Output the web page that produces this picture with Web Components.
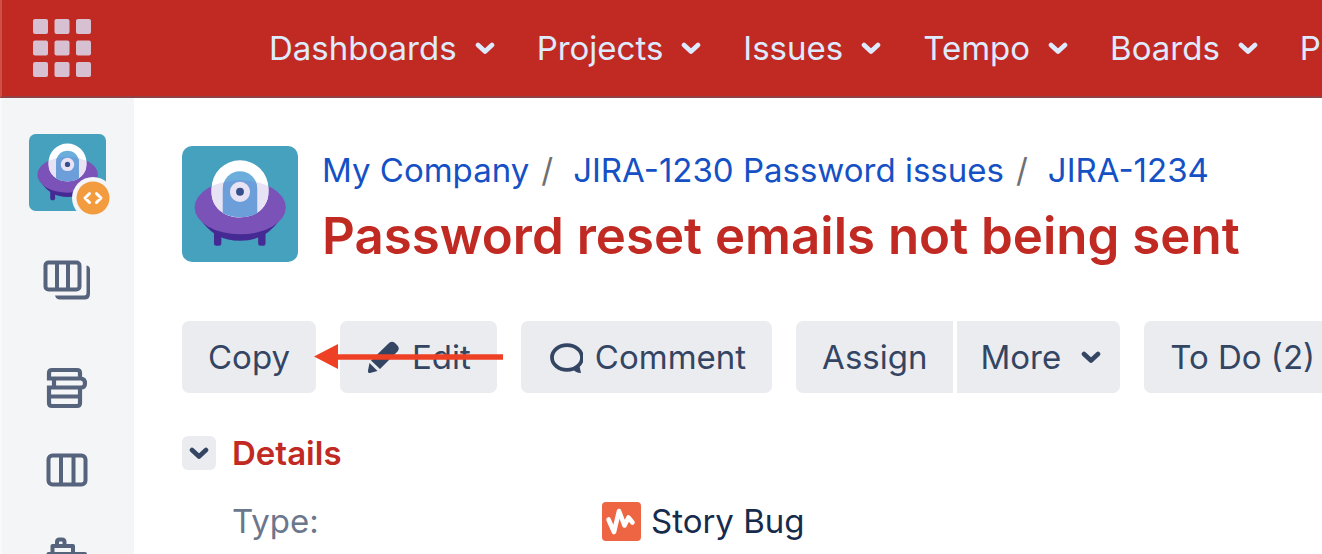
<!DOCTYPE html>
<html lang="en">
<head>
<meta charset="utf-8">
<meta name="viewport" content="width=device-width, initial-scale=1">
<title>JIRA-1234</title>
<style>
  html, body { margin: 0; height: 100%; }
  body { font-family: Inter, "Liberation Sans", sans-serif; font-size: 33px; line-height: 40px; color: #172b4d; background: #fff; overflow: hidden; }
</style>
</head>
<body>
<jira-app></jira-app>
<script>
const define = (name, html) => {
  const template = document.createElement('template');
  template.innerHTML = html;
  customElements.define(name, class extends HTMLElement {
    constructor() {
      super();
      this.attachShadow({ mode: 'open' }).append(template.content.cloneNode(true));
    }
  });
};

define('chevron-icon', `
  <style>:host { display: block; width: 20px; height: 13px; } svg { display: block; }</style>
  <svg width="20" height="13" viewBox="0 0 20 13" aria-hidden="true"><path d="M3 3 10 9.5 17 3" fill="none" stroke="currentColor" stroke-width="4.6" stroke-linecap="round" stroke-linejoin="round"/></svg>`);

define('project-avatar', `
  <style>
    :host { display: block; position: relative; flex: none; width: var(--avatar-size, 116px); height: var(--avatar-size, 116px); }
    svg { display: block; width: 100%; height: 100%; }
  </style>
  <svg viewBox="0 0 115 115" role="img" aria-label="Project avatar">
    <defs><clipPath id="saucer"><ellipse cx="57.7" cy="60.8" rx="45.2" ry="26.8"/></clipPath></defs>
    <rect width="115" height="115" rx="10" fill="#45a1bd"/>
    <path d="M31.7 78H39V96.500Q39 99 36.500 99H34.200Q31.700 99 31.700 96.500ZM75.500 78H82.800V96.500Q82.800 99 80.300 99H78Q75.500 99 75.500 96.500Z" fill="#452a94"/>
    <path d="M18 72Q32 94 57.700 94T97.400 72Z" fill="#452a94"/>
    <ellipse cx="57.700" cy="60.800" rx="45.200" ry="26.800" fill="#7a52b8"/>
    <path d="M29.300 42.300A28.200 28.200 0 0 1 85.700 42.300V46C85.700 60 74 70.700 57.500 70.700S29.300 60 29.300 46Z" fill="#fff"/>
    <path d="M29.300 42.300A28.200 28.200 0 0 1 85.700 42.300V46C85.700 60 74 70.700 57.500 70.700S29.300 60 29.300 46Z" fill="#e8e3f4" clip-path="url(#saucer)"/>
    <path d="M40.500 42A17 17 0 0 1 74.500 42V66.500Q67 70.500 57.500 70.500T40.500 66.500Z" fill="#6caedb"/>
    <path d="M40.500 42A17 17 0 0 1 74.500 42V66.500Q67 70.500 57.500 70.500T40.500 66.500Z" fill="#6c9fd9" clip-path="url(#saucer)"/>
    <circle cx="57.500" cy="45.400" r="10" fill="#e8e3f4"/>
    <circle cx="57.500" cy="45.400" r="3.900" fill="#36508d"/>
  </svg>
  <slot></slot>`);

define('nav-item', `
  <style>
    :host { display: block; flex: none; }
    button { display: flex; align-items: center; gap: 18px; margin: 0; padding: 0; border: 0; background: none; color: inherit; font: inherit; white-space: nowrap; }
  </style>
  <button type="button"><slot></slot><chevron-icon></chevron-icon></button>`);

define('top-bar', `
  <style>
    :host { display: flex; align-items: center; box-sizing: border-box; height: 98px; padding-left: 30px; border-left: 2px solid #cd5049; border-bottom: 2px solid #8f4143; background: #c12a23; color: #deebff; overflow: hidden; }
    .apps { flex: none; width: 60px; height: 60px; margin: 0 177px 0 0; padding: 1px; border: 0; background: none; color: #d7c0d1; }
    svg { display: block; }
    nav { display: flex; gap: 42px; }
  </style>
  <button class="apps" type="button" aria-label="Applications">
    <svg width="58" height="58" viewBox="0 0 58 58" fill="currentColor" aria-hidden="true">
      <rect width="15" height="15" rx="2"/><rect x="21.500" width="15" height="15" rx="2"/><rect x="43" width="15" height="15" rx="2"/>
      <rect y="21.500" width="15" height="15" rx="2"/><rect x="21.500" y="21.500" width="15" height="15" rx="2"/><rect x="43" y="21.500" width="15" height="15" rx="2"/>
      <rect y="43" width="15" height="15" rx="2"/><rect x="21.500" y="43" width="15" height="15" rx="2"/><rect x="43" y="43" width="15" height="15" rx="2"/>
    </svg>
  </button>
  <nav aria-label="Main">
    <nav-item>Dashboards</nav-item><nav-item>Projects</nav-item><nav-item>Issues</nav-item><nav-item>Tempo</nav-item><nav-item>Boards</nav-item><nav-item>P</nav-item>
  </nav>`);

define('side-bar', `
  <style>
    :host { display: block; box-sizing: border-box; flex: none; width: 134px; border-left: 2px solid #f8f9fa; background: #f4f5f7; color: #56637d; overflow: hidden; }
    nav { display: flex; flex-direction: column; align-items: center; padding: 36px 2px 0 0; }
    project-avatar { --avatar-size: 77px; margin-bottom: 45px; }
    .badge { position: absolute; right: -8px; bottom: -8px; width: 42px; height: 42px; }
    a { display: flex; align-items: center; justify-content: center; width: 64px; height: 48px; color: inherit; }
    a.boards { margin-bottom: 60px; }
    a.backlog { margin-bottom: 34px; }
    a.board { margin-bottom: 40px; }
    svg { display: block; }
  </style>
  <nav aria-label="Project">
    <project-avatar>
      <svg class="badge" viewBox="0 0 42 42" aria-hidden="true"><circle cx="21" cy="21" r="21" fill="#f4f5f7"/><circle cx="21" cy="21" r="16.500" fill="#f29b3f"/><path d="M17.500 16.500 13 21 17.500 25.500M24.500 16.500 29 21 24.500 25.500" fill="none" stroke="#fff" stroke-width="3" stroke-linecap="round" stroke-linejoin="round"/></svg>
    </project-avatar>
    <a class="boards" href="#boards" aria-label="Boards"><svg width="48" height="40" viewBox="0 0 48 40" fill="none" stroke="currentColor" stroke-width="4"><rect x="2.500" y="2.500" width="34" height="27" rx="3"/><path d="M14 3V29M25 3V29"/><path d="M43.500 5.500Q47 6 47 9.500V34Q47 39.500 41.500 39.500H17Q13 39.500 12 35.500H41Q43.500 35.500 43.500 33Z" fill="currentColor" stroke="none"/></svg></a>
    <a class="backlog" href="#backlog" aria-label="Backlog"><svg width="42" height="42" viewBox="0 0 42 42" fill="none" stroke="currentColor" stroke-width="4.200"><path d="M3 13.500V6Q3 3 6 3H31Q34 3 34 6V11.500M3 11.500H35Q39 12 39 16.300T35 20.500H3M3 18.500V36Q3 39 6 39H31Q34 39 34 36V20.500M3 29.500H34M8 12V21"/></svg></a>
    <a class="board" href="#board" aria-label="Active board"><svg width="42" height="34" viewBox="0 0 42 34" fill="none" stroke="currentColor" stroke-width="4"><rect x="2.500" y="2.500" width="37" height="29" rx="4"/><path d="M15 3V31M27.500 3V31"/></svg></a>
    <a href="#releases" aria-label="Releases"><svg width="42" height="42" viewBox="0 0 42 42" fill="none" stroke="currentColor" stroke-width="4"><path d="M11 8.500V5Q11 2.500 13.500 2.500H16Q18.500 2.500 18.500 5V8.500M6.500 17V9H27V17M2.500 17H39V39H2.500Z" stroke-linejoin="round"/></svg></a>
  </nav>`);

define('issue-header', `
  <style>
    :host { display: flex; gap: 24px; white-space: nowrap; }
    .text { min-width: 0; }
    ol { display: flex; gap: 12px; margin: 4px 0 14px; padding: 0; list-style: none; }
    li + li::before { content: "/"; margin-right: 20px; color: #707070; }
    a { color: #1551c5; text-decoration: none; }
    h1 { margin: 0; color: #c12a23; font-size: 51px; font-weight: 600; line-height: 64px; }
  </style>
  <project-avatar></project-avatar>
  <div class="text">
    <nav aria-label="Breadcrumb"><ol><li><a href="#project">My Company</a></li><li><a href="#parent">JIRA-1230 Password issues</a></li><li><a href="#issue">JIRA-1234</a></li></ol></nav>
    <h1>Password reset emails not being sent</h1>
  </div>`);

define('tool-button', `
  <style>
    :host { display: block; flex: none; }
    button { display: flex; align-items: center; gap: 12px; height: 72px; margin: 0; padding: 0 var(--pad-x, 26px); border: 0; border-radius: var(--corners, 7px); background: #ebecf0; color: #344563; font: inherit; white-space: nowrap; }
  </style>
  <button type="button"><slot name="before"></slot><slot></slot><slot name="after"></slot></button>`);

define('issue-toolbar', `
  <style>
    :host { display: flex; gap: 24px; }
    .group { display: flex; gap: 4px; }
    .group tool-button:first-child { --corners: 7px 0 0 7px; }
    .group tool-button:last-child { --corners: 0 7px 7px 0; --pad-x: 23px; }
    .callout { position: relative; }
    .arrow { position: absolute; left: 100%; top: 23px; width: 190px; height: 26px; z-index: 1; overflow: visible; }
    svg { display: block; }
    chevron-icon { margin-left: 8px; margin-right: -4px; }
  </style>
  <div class="callout">
    <tool-button>Copy</tool-button>
    <svg class="arrow" viewBox="0 0 190 26" aria-hidden="true"><path d="M-2 12.500 22 0V10.200H187V15.800H22V25Z" fill="#ee4024"/></svg>
  </div>
  <tool-button>
    <svg slot="before" width="34" height="34" viewBox="0 0 34 34" fill="currentColor" aria-hidden="true"><path d="M5 20.500 23 3Q26 .500 29 3L31.500 5.500Q34 8.500 31.500 11.500L14 29ZM3.500 23 11.500 31 4 33Q1.500 33.500 2 30.500Z"/></svg>
    Edit
  </tool-button>
  <tool-button>
    <svg slot="before" width="36" height="32" viewBox="0 0 36 32" aria-hidden="true"><ellipse cx="20" cy="16.500" rx="15" ry="12.300" fill="none" stroke="currentColor" stroke-width="3.800"/><path d="M25 27 32 23 34 32Q28 32 25 27Z" fill="currentColor"/></svg>
    Comment
  </tool-button>
  <div class="group">
    <tool-button>Assign</tool-button>
    <tool-button>More<chevron-icon slot="after"></chevron-icon></tool-button>
  </div>
  <tool-button>To Do (2)</tool-button>`);

define('issue-details', `
  <style>
    :host { display: block; }
    header { display: flex; align-items: center; gap: 16px; margin-bottom: 28px; }
    button { display: flex; align-items: center; justify-content: center; width: 34px; height: 34px; margin: 0; padding: 0; border: 0; border-radius: 6px; background: #ebecf0; color: #344563; }
    h2 { margin: 0; color: #c12a23; font-size: 33px; line-height: 40px; font-weight: 600; }
    dl { display: grid; grid-template-columns: 370px 1fr; margin: 0; padding-left: 50px; }
    dt { color: #6b778c; }
    dd { display: flex; align-items: center; gap: 10px; margin: 0; white-space: nowrap; }
    svg { display: block; flex: none; }
  </style>
  <header><button type="button" aria-label="Toggle details" aria-expanded="true"><chevron-icon></chevron-icon></button><h2>Details</h2></header>
  <dl>
    <dt>Type:</dt>
    <dd><svg width="39" height="39" viewBox="0 0 39 39" aria-hidden="true"><rect width="39" height="39" rx="4" fill="#ee6543"/><path d="M6.500 17.500 12 30 17 9 22.500 23.500 26.500 15.500 30.500 20.500" fill="none" stroke="#fff" stroke-width="4.600" stroke-linecap="round" stroke-linejoin="round"/></svg>Story Bug</dd>
  </dl>`);

define('jira-app', `
  <style>
    :host { display: flex; flex-direction: column; height: 100vh; overflow: hidden; }
    .body { display: flex; flex: 1; min-height: 0; }
    main { flex: 1; min-width: 0; padding: 48px 0 0 48px; overflow: hidden; }
    issue-toolbar { margin: 53px 0 40px; }
  </style>
  <top-bar></top-bar>
  <div class="body">
    <side-bar></side-bar>
    <main><issue-header></issue-header><issue-toolbar></issue-toolbar><issue-details></issue-details></main>
  </div>`);
</script>
</body>
</html>
